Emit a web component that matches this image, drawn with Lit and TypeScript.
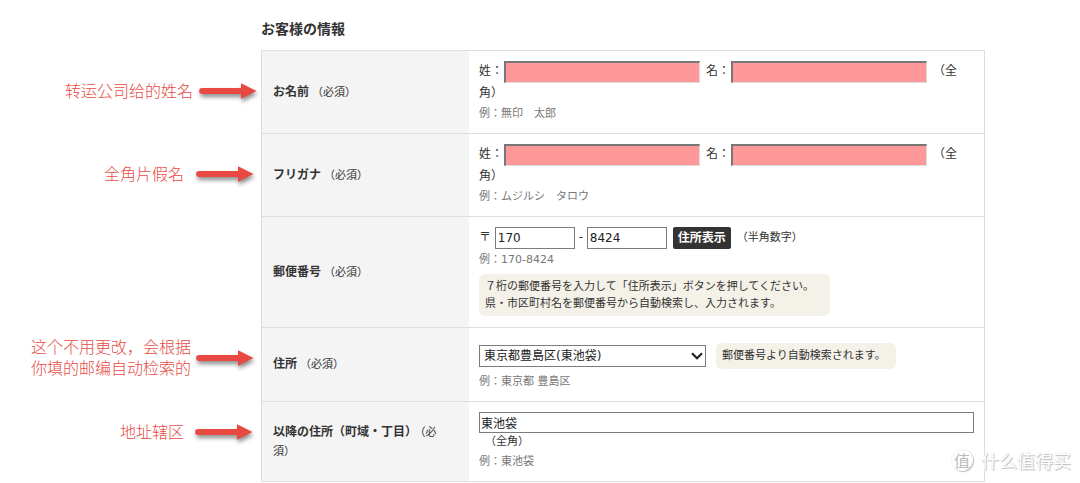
import { LitElement, html, css, svg, nothing, type TemplateResult } from "lit";
import { customElement, property } from "lit/decorators.js";

@customElement("note-arrow")
class NoteArrow extends LitElement {
  static styles = css`
    :host { display: block; flex: none; }
    .arrow { display: block; overflow: visible; filter: drop-shadow(1px 3px 2px rgba(0, 0, 0, 0.45)); }
  `;
  render() {
    return html`<svg class="arrow" width="58" height="16" viewBox="0 0 58 16" aria-hidden="true">
      ${svg`<path d="M3 5.1 H42 V0.2 L57.5 8 L42 15.8 V10.9 H3 A2.9 2.9 0 0 1 3 5.1 Z" fill="#e84a43"/>`}
    </svg>`;
  }
}

@customElement("form-row")
class FormRow extends LitElement {
  @property() label = "";
  @property() for = "";
  @property({ attribute: false }) note: string[] = [];
  @property({ attribute: false }) content: TemplateResult | typeof nothing = nothing;
  @property() tone = "";

  static styles = css`
    :host { display: block; }
    .row { display: grid; grid-template-columns: 261px minmax(0, 1fr); }
    .note {
      display: flex; align-items: center; justify-content: flex-end; gap: 6px;
      padding: 0 4px 3px 0; color: #e84a43; font-size: 16px; line-height: 21px; font-weight: 300;
    }
    .note.wide { gap: 12px; padding-right: 7px; }
    .note.far { gap: 11px; padding-right: 8px; padding-bottom: 20px; }
    .note.near { gap: 5px; padding-right: 7px; padding-bottom: 14px; }
    .line { display: block; }
    .cells {
      display: grid; grid-template-columns: 207px minmax(0, 1fr);
      border: 1px solid #dedede; border-top: 0;
    }
    .head {
      display: flex; align-items: center; background: #f4f4f4;
      padding: 10px 20px 10px 11px; font-size: 12px; line-height: 18px; color: #333;
    }
    .name { font-weight: 700; }
    .must { margin-left: 3px; font-size: 11px; }
    .value { padding: 10px; font-size: 12px; line-height: 20px; color: #333; }
    .tall { padding-top: 15px; }
    .field {
      box-sizing: border-box; height: 22px; margin: 0; padding: 0 2px; border: 1px solid #7c7c7c;
      border-radius: 0; background: #fff; color: #222; font: inherit; font-size: 12px; vertical-align: top;
    }
    .empty {
      width: 196px; margin-left: 1px; background: #ff9999; border-style: solid;
      border-color: #777 #dcdcdc #dcdcdc #777; border-width: 2px 1px 1px 2px;
    }
    .zip { width: 80px; }
    .full { display: block; width: 100%; height: 21px; padding: 0 1px; font-size: 12px; }
    .gap { margin-left: 6px; }
    .hint { margin-left: 6px; font-size: 12px; }
    .small { font-size: 11px; }
    .note-line { padding-left: 6px; font-size: 11px; line-height: 18px; }
    .example { margin: 2px 0 0; font-size: 11px; line-height: 18px; color: #777; }
    .tall .example { margin-top: 4px; }
    .lookup {
      height: 22px; margin: 0 0 0 6px; padding: 0 5px; border: 0; border-radius: 2px; background: #333;
      color: #fff; font: inherit; font-size: 12px; font-weight: 700; line-height: 20px; vertical-align: top;
    }
    .tip {
      width: fit-content; margin: 5px 0 1px; padding: 4px 16px 4px 6px; border-radius: 6px;
      background: #f4f1e8; font-size: 11px; line-height: 17px; color: #333;
    }
    .inline { margin: 0; padding: 4px 10px 5px 6px; }
    .pair { display: flex; align-items: center; gap: 10px; }
    .selectbox { display: grid; align-items: center; width: 227px; }
    .select { grid-area: 1 / 1; appearance: none; width: 100%; padding: 0 24px 0 4px; font-size: 12px; }
    .chevron { grid-area: 1 / 1; justify-self: end; margin-right: 3px; pointer-events: none; }
  `;

  render() {
    return html`<div class="row">
      <div class="note ${this.tone}">
        ${this.note.length
          ? html`<span>${this.note.map((t) => html`<span class="line">${t}</span>`)}</span><note-arrow></note-arrow>`
          : nothing}
      </div>
      <div class="cells">
        <div class="head"><label for=${this.for}><span class="name">${this.label}</span><span class="must">（必須）</span></label></div>
        <div class="value ${this.for === "area" ? "tall" : ""}">${this.content}</div>
      </div>
    </div>`;
  }
}

const names = (id: string, example: string) => html`
  <div><label for=${id}>姓：</label><input class="field empty" id=${id} type="text" /><label class="gap" for="${id}-given">名：</label><input class="field empty" id="${id}-given" type="text" /><span class="hint">（全角）</span></div>
  <p class="example">${example}</p>`;

const zip = html`
  <div><label for="zip">〒</label> <input class="field zip" id="zip" type="text" value="170" /> - <input class="field zip" type="text" aria-label="郵便番号 下4桁" value="8424" /><button class="lookup" type="button">住所表示</button><span class="hint small">（半角数字）</span></div>
  <p class="example">例：170-8424</p>
  <p class="tip">７桁の郵便番号を入力して「住所表示」ボタンを押してください。<br />県・市区町村名を郵便番号から自動検索し、入力されます。</p>`;

const area = html`
  <div class="pair">
    <div class="selectbox">
      <select class="field select" id="area"><option>東京都豊島区(東池袋)</option></select>
      <svg class="chevron" width="12" height="8" viewBox="0 0 12 8" aria-hidden="true"><path d="M1 1.2 L6 6.2 L11 1.2" fill="none" stroke="#222" stroke-width="2.2" /></svg>
    </div>
    <p class="tip inline">郵便番号より自動検索されます。</p>
  </div>
  <p class="example">例：東京都 豊島区</p>`;

const street = html`
  <input class="field full" id="street" type="text" value="東池袋" />
  <div class="note-line">（全角）</div>
  <p class="example">例：東池袋</p>`;

@customElement("app-root")
class AppRoot extends LitElement {
  static styles = css`
    :host {
      display: block; position: relative; background: #fff; color: #333;
      font-family: "DejaVu Sans", "Noto Sans CJK JP", sans-serif;
    }
    .form { display: block; padding: 19px 95px 0 0; }
    .title { margin: 0 0 0 261px; padding-bottom: 11px; font-size: 14px; line-height: 20px; font-weight: 700; }
    .rule { margin-left: 261px; border-top: 1px solid #dedede; }
    .mark {
      position: absolute; right: 9px; bottom: 8px; display: flex; align-items: center; gap: 8px;
      color: #fff; font-family: "Noto Sans CJK SC", sans-serif; font-size: 18px; line-height: 28px;
      text-shadow: 1px 1px 1px #bbb, 0 0 1px #ccc;
    }
    .seal {
      display: grid; place-items: center; box-sizing: border-box; width: 22px; height: 22px;
      border: 1px solid #f4f4f4; border-radius: 50%; box-shadow: 1px 1px 1px #bbb;
      color: #bbb; font-size: 16px; line-height: 20px; text-shadow: none;
    }
  `;
  render() {
    return html`<form class="form">
        <h1 class="title">お客様の情報</h1>
        <div class="rule"></div>
        <form-row label="お名前" for="name" .note=${["转运公司给的姓名"]} .content=${names("name", "例：無印　太郎")}></form-row>
        <form-row label="フリガナ" for="kana" tone="wide" .note=${["全角片假名"]} .content=${names("kana", "例：ムジルシ　タロウ")}></form-row>
        <form-row label="郵便番号" for="zip" .content=${zip}></form-row>
        <form-row label="住所" for="area" tone="near" .note=${["这个不用更改，会根据", "你填的邮编自动检索的"]} .content=${area}></form-row>
        <form-row label="以降の住所（町域・丁目）" for="street" tone="far" .note=${["地址辖区"]} .content=${street}></form-row>
      </form>
      <div class="mark"><span class="seal">值</span><span>什么值得买</span></div>`;
  }
}
